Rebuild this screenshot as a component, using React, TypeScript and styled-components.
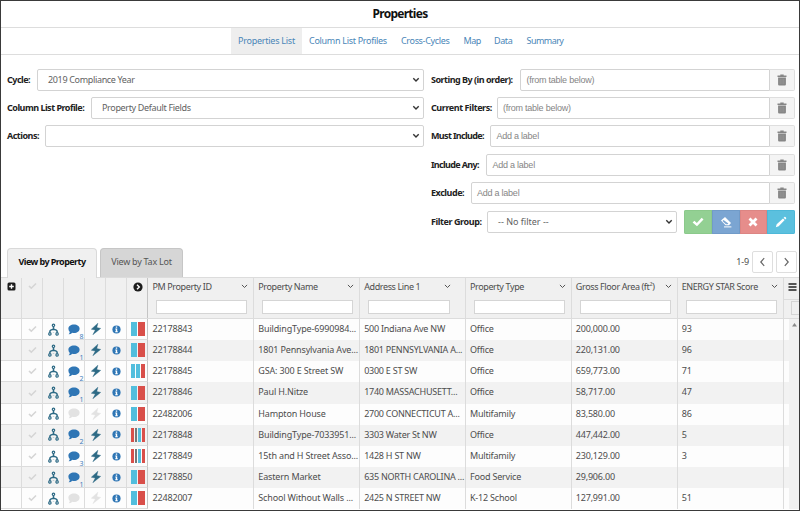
import React from "react";
import styled, { createGlobalStyle } from "styled-components";

const Global = createGlobalStyle`
  * { box-sizing: border-box; }
  body { margin: 0; background: #fff; }
`;

const line = "#dcdcdc";

const Page = styled.div`
  width: 800px;
  height: 511px;
  overflow: hidden;
  border: 1px solid #3a3a3a;
  background: #fff;
  color: #4d4d4d;
  font-family: "Noto Sans", "Open Sans", sans-serif;
  font-size: 9px;
  letter-spacing: -0.16px;
  line-height: 12px;
  white-space: nowrap;
`;

const Title = styled.h1`
  margin: 0;
  height: 27px;
  border-bottom: 1px solid #ddd;
  text-align: center;
  color: #111;
  font-size: 12px;
  font-weight: 700;
  letter-spacing: -0.72px;
  line-height: 26px;
`;

const Nav = styled.nav`
  display: flex;
  height: 27px;
  padding-left: 230px;
  border-bottom: 1px solid #ddd;
`;

const NavLink = styled.a<{ $w: number; $ls: number; $active?: boolean }>`
  width: ${(p) => p.$w}px;
  padding-left: 7px;
  background: ${(p) => (p.$active ? "#eeeeee" : "transparent")};
  color: #4a86b8;
  line-height: 25px;
  letter-spacing: ${(p) => p.$ls}px;
`;

const Form = styled.section`
  display: grid;
  grid-template-columns: 416.5px 364px;
  column-gap: 7.5px;
  height: 179px;
  padding: 14px 0 0 6px;
`;

const Column = styled.div`
  display: flex;
  flex-direction: column;
  gap: 6.2px;
`;

const Field = styled.div`
  display: flex;
  height: 22px;
  align-items: center;
`;

const FilterField = styled(Field)`
  height: 24px;
`;

const Label = styled.label<{ $w: number; $ls?: number }>`
  flex: none;
  width: ${(p) => p.$w}px;
  color: #222;
  font-weight: 700;
  letter-spacing: ${(p) => p.$ls ?? -0.5}px;
`;

const Select = styled.div`
  display: flex;
  flex: 1;
  height: 22px;
  align-items: center;
  justify-content: space-between;
  padding: 0 3px 0 10px;
  border: 1px solid #d3d3d3;
  border-radius: 2px;
  color: #626262;
  letter-spacing: -0.34px;
`;

const Hint = styled.span`
  letter-spacing: 0;
`;

const Input = styled.div`
  flex: 1;
  height: 22px;
  padding-left: 5.5px;
  border: 1px solid #d3d3d3;
  border-radius: 2px 0 0 2px;
  color: #858585;
  font-family: "Liberation Sans", Arial, sans-serif;
  font-size: 9px;
  letter-spacing: -0.24px;
  line-height: 20px;
`;

const Addon = styled.button`
  display: grid;
  place-items: center;
  width: 25px;
  height: 22px;
  padding: 0;
  border: 1px solid #dedede;
  border-left: 0;
  border-radius: 0 2px 2px 0;
  background: #f4f4f4;
`;

const Actions = styled.div`
  display: flex;
  margin-left: 7px;
  border-radius: 2px;
  overflow: hidden;
`;

const Action = styled.button<{ $bg: string; $edge: string }>`
  display: grid;
  place-items: center;
  width: 27.75px;
  height: 24px;
  padding: 0;
  border: 1px solid ${(p) => p.$edge};
  background: ${(p) => p.$bg};
`;

const TabBar = styled.div`
  display: flex;
  height: 43px;
  padding: 14px 2px 0 6px;
  gap: 3px;
`;

const Tab = styled.div<{ $w: number; $active?: boolean }>`
  width: ${(p) => p.$w}px;
  height: ${(p) => (p.$active ? 30 : 29)}px;
  z-index: 1;
  border: 1px solid ${(p) => (p.$active ? "#d9d9d9" : "#c6c6c6")};
  border-bottom: 0;
  border-radius: 4px 4px 0 0;
  background: ${(p) => (p.$active ? "#f0f0f0" : "#d6d6d6")};
  color: ${(p) => (p.$active ? "#111" : "#555")};
  font-weight: ${(p) => (p.$active ? 700 : 400)};
  letter-spacing: ${(p) => (p.$active ? -0.56 : -0.26)}px;
  line-height: 26px;
  text-align: center;
`;

const Pager = styled.div`
  display: flex;
  gap: 3px;
  margin: 3px 0 0 auto;
  line-height: 22px;
`;

const PageButton = styled.button`
  display: grid;
  place-items: center;
  width: 21px;
  height: 22px;
  padding: 0;
  border: 1px solid #dedede;
  border-radius: 2px;
  background: #fff;
`;

const tracks = "20.5px repeat(6, 21.17px) repeat(6, 105.85px) 1fr";

const Head = styled.div`
  display: grid;
  grid-template-columns: ${tracks};
  height: 42px;
  background: #f0f0f0;
  border-top: 1px solid ${line};
  border-bottom: 1px solid ${line};
`;

const IconHead = styled.div<{ $last?: boolean }>`
  display: flex;
  justify-content: center;
  padding: 4px 0 0 1px;
  border-right: 1px solid ${(p) => (p.$last ? "#c4c4c4" : line)};
`;

const ColumnHead = styled.div<{ $short?: boolean }>`
  display: flex;
  flex-direction: column;
  padding: 2px ${(p) => (p.$short ? 15 : 6)}px 0 4px;
  border-right: 1px solid ${line};
  letter-spacing: -0.38px;
`;

const HeadLine = styled.div`
  display: flex;
  height: 13px;
  align-items: center;
  justify-content: space-between;
  margin-right: -1px;
`;

const Filter = styled.div`
  height: 14px;
  margin: 7px 0 0 4px;
  border: 1px solid #d5d5d5;
  background: #fff;
`;

const MenuHead = styled.div`
  display: flex;
  flex-direction: column;
  padding: 5px 0 0 4px;
`;

const MenuRule = styled.div`
  height: 19px;
  margin: 8px 0 0 -4px;
  padding: 1px 0 0 7px;
  border-top: 1px solid ${line};
`;

const MenuBox = styled.div`
  height: 14px;
  border: 1px solid #d5d5d5;
  border-right: 0;
`;

const Body = styled.div`
  display: grid;
  grid-template-columns: 788px 1fr;
`;

const Row = styled.div<{ $odd: boolean }>`
  display: grid;
  grid-template-columns: 20.5px repeat(6, 21.17px) repeat(6, 105.85px) 1fr;
  width: 788px;
  height: 21.17px;
  overflow: hidden;
  background: ${(p) => (p.$odd ? "#f2f2f2" : "#fdfdfd")};
`;

const IconCell = styled.div<{ $last?: boolean }>`
  display: flex;
  align-items: center;
  justify-content: center;
  padding-left: 1px;
  border-right: 1px solid ${(p) => (p.$last ? "#c4c4c4" : line)};
  border-bottom: 1px solid ${line};
`;

const Cell = styled.div<{ $ls: number }>`
  padding-left: 4px;
  border-right: 1px solid ${line};
  letter-spacing: ${(p) => p.$ls}px;
  line-height: 19.5px;
`;

const NoteWrap = styled.div`
  position: relative;
  display: flex;
`;

const Count = styled.span`
  position: absolute;
  right: -3px;
  bottom: -5px;
  color: #3f7dbb;
  font-size: 7px;
  line-height: 7px;
`;

const Swatches = styled.div`
  display: flex;
  width: 14px;
  height: 14px;
  gap: 1px;
`;

const Swatch = styled.i<{ $c: string }>`
  flex: 1;
  background: ${(p) => p.$c};
`;

const Scroll = styled.div`
  display: flex;
  justify-content: center;
  padding-top: 4px;
  background: #f1f1f1;
`;

const Caret = () => (
  <svg width="8" height="6" viewBox="0 0 8 6" fill="none" stroke="#333" strokeWidth="1.4"><path d="M1.3 1.3 4 4 6.7 1.3" /></svg>
);
const ThinCaret = () => (
  <svg width="7" height="5" viewBox="0 0 7 5" fill="none" stroke="#555" strokeWidth="1"><path d="M.9 .9 3.5 3.5 6.1 .9" /></svg>
);
const Trash = () => (
  <svg width="10" height="12" viewBox="0 0 10 12" fill="#868686">
    <path d="M.5 1.4h2.8V.5h3.4v.9h2.8v1.5h-9zM1.1 3.5h7.8v7q0 1-1 1H2.1q-1 0-1-1z" />
    <path d="M3.2 4.7v5.5M5 4.7v5.5M6.8 4.7v5.5" stroke="#9d9d9d" strokeWidth=".6" />
  </svg>
);
const Check = ({ c, s }: { c: string; s: number }) => (
  <svg width={s} height={s} viewBox="0 0 12 12" fill={c}><path d="M.6 6.6 2.4 4.8 4.8 7 9.7 1.8 11.5 3.5 5 10.3z" /></svg>
);
const ThinCheck = () => (
  <svg width="9" height="8" viewBox="0 0 9 8" fill="none" stroke="#d5d5d5" strokeWidth="1.6"><path d="M1 4 3.3 6.2 8 1.5" /></svg>
);
const Eraser = () => (
  <svg width="12" height="12" viewBox="0 0 12 12">
    <path d="M5 1 1 4.6 5.6 9.2H9L11 7z" fill="#fff" />
    <path d="M3.6 3.9 2.5 4.9 6 8.3h1.6l.8-.8z" fill="#7ba5d2" />
    <path d="M4 10.9h7.4" stroke="#fff" strokeWidth="1" />
  </svg>
);
const Cross = () => (
  <svg width="10" height="10" viewBox="0 0 10 10" stroke="#fff" strokeWidth="2.8"><path d="m1.5 1.5 7 7m0-7-7 7" /></svg>
);
const Pencil = () => (
  <svg width="12" height="12" viewBox="0 0 12 12" fill="#fff"><path d="m.8 11.2.9-3L8 2.4l1.7 1.7-6 6.2zM8.6 1.8l.8-.8q.5-.4 1 0l.7.7q.4.5 0 1l-.8.8z" /></svg>
);
const Plus = () => (
  <svg width="9" height="9" viewBox="0 0 9 9"><rect x=".5" y=".5" width="8" height="8" rx="1.5" fill="#1c1c1c" /><path d="M4.5 2.2v4.6M2.2 4.5h4.6" stroke="#fff" strokeWidth="1.4" /></svg>
);
const CircleRight = () => (
  <svg width="10" height="10" viewBox="0 0 10 10"><circle cx="5" cy="5" r="4.6" fill="#1c1c1c" /><path d="M4 2.7 6.3 5 4 7.3" fill="none" stroke="#fff" strokeWidth="1.4" /></svg>
);
const Tree = () => (
  <svg width="11" height="13" viewBox="0 0 11 13" fill="none" stroke="#2d6a85" strokeWidth="1.2">
    <circle cx="5.5" cy="2.3" r="1.2" /><circle cx="1.9" cy="10.9" r="1.2" /><circle cx="9.1" cy="10.9" r="1.2" />
    <path d="M5.5 3.6v2.6M1.9 9.6V8.2Q2.2 6.7 5.5 6.2 8.8 6.7 9.1 8.2v1.4M5.5 9.6v.1" strokeWidth="1.5" />
  </svg>
);
const Bubble = ({ c }: { c: string }) => (
  <svg width="12" height="11" viewBox="0 0 12 11" fill={c}><path d="M6 .5c3.2 0 5.6 1.8 5.6 4.2S9.2 9 6 9q-.8 0-1.6-.2Q2.7 10.3.6 10.3q1-.9 1.2-2.3Q.4 6.7.4 4.7C.4 2.3 2.8.5 6 .5z" /></svg>
);
const Bolt = ({ c }: { c: string }) => (
  <svg width="10" height="12" viewBox="0 0 10 12" fill={c}><path d="M6.9.2.3 6.2 4.3 7.1 1.8 11.8 9.7 5.4 5.8 4.5z" stroke={c} strokeWidth=".4" /></svg>
);
const Info = () => (
  <svg width="9" height="9" viewBox="0 0 9 9"><circle cx="4.5" cy="4.5" r="4.1" fill="#2f76b5" /><path d="M3.8 1.5h1.4v1.2H3.8zM3.3 3.5h1.9v2.8h.6v.9H3.2v-.9h.6V4.4h-.5z" fill="#fff" /></svg>
);
const Arrow = ({ d }: { d: string }) => (
  <svg width="7" height="10" viewBox="0 0 7 10" fill="none" stroke="#666" strokeWidth="1.2"><path d={d} /></svg>
);
const Bars = () => (
  <svg width="9" height="8" viewBox="0 0 9 8" stroke="#222" strokeWidth="1.5"><path d="M.5 1h8M.5 4h8M.5 7h8" /></svg>
);
const UpTriangle = () => (
  <svg width="5" height="4" viewBox="0 0 5 4" fill="#8a8a8a"><path d="M2.5 0 5 3.5H0z" /></svg>
);

const B = "#52bedd", R = "#d94f4a", G = "#777";
const pair = [B, R], triple = [B, B, R], quad = [R, G, B, R];

const nav: [string, number, number][] = [
  ["Properties List", 71, -0.25], ["Column List Profiles", 92, -0.3], ["Cross-Cycles", 62.5, -0.34],
  ["Map", 30.5, -0.5], ["Data", 32.5, -0.38], ["Summary", 50, -0.55],
];
const selects: [string, number, string][] = [
  ["Cycle:", 30, "2019 Compliance Year"], ["Column List Profile:", 84, "Property Default Fields"], ["Actions:", 38, ""],
];
const inputs: [string, number, string, number][] = [
  ["Sorting By (in order):", 89, "(from table below)", -0.5], ["Current Filters:", 65.5, "(from table below)", -0.42],
  ["Must Include:", 59, "Add a label", -0.64], ["Include Any:", 55, "Add a label", -0.66], ["Exclude:", 39.5, "Add a label", -0.46],
];
const heads = ["PM Property ID", "Property Name", "Address Line 1", "Property Type", "Gross Floor Area (ft²)", "ENERGY STAR Score"];
const spacing = [-0.16, -0.15, -0.24, -0.2, -0.2, -0.16];
const rows: { note?: string; sw: string[]; v: string[] }[] = [
  { note: "8", sw: pair, v: ["22178843", "BuildingType-6990984...", "500 Indiana Ave NW", "Office", "200,000.00", "93"] },
  { note: "1", sw: pair, v: ["22178844", "1801 Pennsylvania Ave...", "1801 PENNSYLVANIA A...", "Office", "220,131.00", "96"] },
  { note: "2", sw: triple, v: ["22178845", "GSA: 300 E Street SW", "0300 E ST SW", "Office", "659,773.00", "71"] },
  { note: "1", sw: pair, v: ["22178846", "Paul H.Nitze", "1740 MASSACHUSETT...", "Office", "58,717.00", "47"] },
  { sw: pair, v: ["22482006", "Hampton House", "2700 CONNECTICUT A...", "Multifamily", "83,580.00", "86"] },
  { note: "2", sw: quad, v: ["22178848", "BuildingType-7033951...", "3303 Water St NW", "Office", "447,442.00", "5"] },
  { note: "3", sw: quad, v: ["22178849", "15th and H Street Asso...", "1428 H ST NW", "Multifamily", "230,129.00", "3"] },
  { note: "1", sw: pair, v: ["22178850", "Eastern Market", "635 NORTH CAROLINA ...", "Food Service", "29,906.00", ""] },
  { sw: pair, v: ["22482007", "School Without Walls ...", "2425 N STREET NW", "K-12 School", "127,991.00", "51"] },
];

export default function App() {
  return (
    <Page>
      <Global />
      <Title>Properties</Title>
      <Nav>
        {nav.map(([t, w, ls], i) => <NavLink key={t} $w={w} $ls={ls} $active={i === 0}>{t}</NavLink>)}
      </Nav>
      <Form>
        <Column>
          {selects.map(([l, w, v]) => (
            <Field key={l}><Label $w={w}>{l}</Label><Select><span>{v}</span><Caret /></Select></Field>
          ))}
        </Column>
        <Column>
          {inputs.map(([l, w, v, ls]) => (
            <Field key={l}><Label $w={w} $ls={ls}>{l}</Label><Input>{v}</Input><Addon><Trash /></Addon></Field>
          ))}
          <FilterField>
            <Label $w={56} $ls={-0.42}>Filter Group:</Label>
            <Select><Hint>-- No filter --</Hint><Caret /></Select>
            <Actions>
              <Action $bg="#93d093" $edge="#8bc98b"><Check c="#fff" s={12} /></Action>
              <Action $bg="#7ba5d2" $edge="#719bc8"><Eraser /></Action>
              <Action $bg="#e68d8b" $edge="#dc8583"><Cross /></Action>
              <Action $bg="#5bc0de" $edge="#4db8d8"><Pencil /></Action>
            </Actions>
          </FilterField>
        </Column>
      </Form>
      <TabBar>
        <Tab $w={90} $active>View by Property</Tab>
        <Tab $w={83}>View by Tax Lot</Tab>
        <Pager>
          <span>1-9</span>
          <PageButton><Arrow d="M5.2 1.2 1.8 5l3.4 3.8" /></PageButton>
          <PageButton><Arrow d="M1.8 1.2 5.2 5 1.8 8.8" /></PageButton>
        </Pager>
      </TabBar>
      <Head>
        <IconHead><Plus /></IconHead>
        <IconHead><ThinCheck /></IconHead>
        <IconHead /><IconHead /><IconHead /><IconHead />
        <IconHead $last><CircleRight /></IconHead>
        {heads.map((h, i) => (
          <ColumnHead key={h} $short={i === 2}>
            <HeadLine><span>{h}</span><ThinCaret /></HeadLine>
            <Filter />
          </ColumnHead>
        ))}
        <MenuHead><Bars /><MenuRule><MenuBox /></MenuRule></MenuHead>
      </Head>
      <Body>
        <div>
          {rows.map((r, i) => (
            <Row key={r.v[0]} $odd={i % 2 === 1}>
              <IconCell />
              <IconCell><ThinCheck /></IconCell>
              <IconCell><Tree /></IconCell>
              <IconCell><NoteWrap><Bubble c={r.note ? "#2f76b5" : "#e2e2e2"} />{r.note && <Count>{r.note}</Count>}</NoteWrap></IconCell>
              <IconCell><Bolt c={r.note ? "#2d6a85" : "#e2e2e2"} /></IconCell>
              <IconCell><Info /></IconCell>
              <IconCell $last><Swatches>{r.sw.map((c, j) => <Swatch key={j} $c={c} />)}</Swatches></IconCell>
              {r.v.map((t, j) => <Cell key={j} $ls={spacing[j]}>{t}</Cell>)}
            </Row>
          ))}
        </div>
        <Scroll><UpTriangle /></Scroll>
      </Body>
    </Page>
  );
}
